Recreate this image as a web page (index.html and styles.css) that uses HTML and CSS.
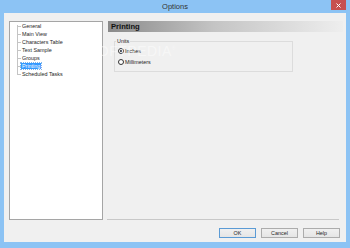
FILE: index.html
```html
<!DOCTYPE html>
<html lang="en">
<head>
    <meta charset="UTF-8">
    <title>Options</title>
    <link rel="stylesheet" href="styles.css">
</head>
<body>
    <div class="window">
        <div class="titlebar">
            <span></span>
            <span class="title">Options</span>
            <button class="close" type="button">
                <svg viewBox="0 0 10 10" width="5" height="5">
                    <path d="M1 1L9 9M9 1L1 9" stroke="#fff" stroke-width="2"></path>
                </svg>
            </button>
        </div>

        <div class="client">
            <div class="main">
                <!-- Left tree of pages -->
                <div class="tree">
                    <ul class="tree-list">
                        <li><span>General</span></li>
                        <li><span>Main View</span></li>
                        <li><span>Characters Table</span></li>
                        <li><span>Text Sample</span></li>
                        <li><span>Groups</span></li>
                        <li><span class="selected">Printing</span></li>
                        <li><span>Scheduled Tasks</span></li>
                    </ul>
                </div>

                <!-- Page content -->
                <div class="panel">
                    <div class="panel-header">Printing</div>

                    <fieldset class="group">
                        <legend>Units</legend>
                        <div class="radio-row">
                            <span class="radio checked"></span>
                            <span>Inches</span>
                        </div>
                        <div class="radio-row">
                            <span class="radio"></span>
                            <span>Millimeters</span>
                        </div>
                    </fieldset>

                    <div class="separator"></div>
                </div>
            </div>

            <div class="buttons">
                <button type="button" class="btn btn-default">OK</button>
                <button type="button" class="btn">Cancel</button>
                <button type="button" class="btn">Help</button>
            </div>
        </div>

        <div class="watermark">SOFTPEDIA<sup>®</sup></div>
    </div>
</body>
</html>
```

FILE: styles.css
```css
/* Page */
* {
    box-sizing: border-box;
}
body {
    margin: 0;
    font-family: "Liberation Sans", Arial, sans-serif;
    color: #1e1e1e;
}

/* Window frame */
.window {
    position: relative;
    width: 350px;
    height: 248px;
    padding: 0 4px 6px 4px;
    background-color: #8cc3f4;
    display: flex;
    flex-direction: column;
}

.titlebar {
    height: 13px;
    display: grid;
    grid-template-columns: 1fr auto 1fr;
    align-items: start;
}
.title {
    font-size: 7.5px;
    line-height: 14px;
    color: #333;
}
.close {
    justify-self: end;
    width: 15px;
    height: 10px;
    padding: 0;
    border: none;
    background-color: #c75050;
    display: flex;
    align-items: center;
    justify-content: center;
}

/* Client area */
.client {
    flex: 1;
    background-color: #f0f0f0;
    padding: 8px 3px 4px 5px;
    display: flex;
    flex-direction: column;
}
.main {
    height: 199px;
    display: flex;
    gap: 5px;
}

/* Tree */
.tree {
    width: 94px;
    flex: none;
    background-color: #fff;
    border: 1px solid #a5a5a5;
    padding-left: 7px;
}
.tree-list {
    list-style: none;
    margin: 0;
    padding: 0;
}
.tree-list li {
    position: relative;
    height: 8px;
    line-height: 8px;
    padding-left: 4px;
    font-size: 5.4px;
    white-space: nowrap;
}
.tree-list li::before {
    content: "";
    position: absolute;
    left: 0;
    top: 4px;
    width: 4px;
    border-top: 1px solid #c4c4c4;
}
.tree-list li::after {
    content: "";
    position: absolute;
    left: 0;
    top: 0;
    bottom: 0;
    border-left: 1px solid #c4c4c4;
}
.tree-list li:first-child::after {
    top: 3px;
}
.tree-list li:last-child::after {
    bottom: 4px;
}
.tree-list span {
    padding: 0 1px;
}
.tree-list .selected {
    background-color: #3399ff;
    color: #fff;
    outline: 1px dotted #7fb5ea;
}

/* Right panel */
.panel {
    flex: 1;
    display: flex;
    flex-direction: column;
}
.panel-header {
    height: 11px;
    line-height: 11px;
    padding-left: 3px;
    font-size: 7.6px;
    font-weight: 700;
    color: #111;
    background: linear-gradient(to right, #8a8a8a 0%, #c4c4c4 45%, #eeeeee 100%);
}

.group {
    margin: 6px 0 0 6px;
    width: 179px;
    padding: 1px 3px 4px 3px;
    border: 1px solid #dcdcdc;
}
.group legend {
    margin-left: -2px;
    padding: 0 1px;
    font-size: 5.4px;
    line-height: 7px;
}
.radio-row {
    height: 10px;
    display: flex;
    align-items: center;
    gap: 1px;
    font-size: 5.4px;
}
.radio-row + .radio-row {
    margin-top: 1px;
}
.radio {
    width: 6px;
    height: 6px;
    border: 1px solid #333;
    border-radius: 50%;
    background-color: #fff;
    display: flex;
    align-items: center;
    justify-content: center;
}
.radio.checked::after {
    content: "";
    width: 2px;
    height: 2px;
    border-radius: 50%;
    background-color: #1e1e1e;
}

.separator {
    margin: auto 4px 0 -1px;
    height: 1px;
    background-color: #c8c8c8;
}

/* Dialog buttons */
.buttons {
    margin-top: 8px;
    padding-right: 3px;
    display: flex;
    justify-content: flex-end;
    gap: 5px;
}
.btn {
    width: 37px;
    height: 10px;
    padding: 0;
    font-family: inherit;
    font-size: 5.4px;
    color: #1e1e1e;
    background: linear-gradient(#f0f0f0, #e5e5e5);
    border: 1px solid #acacac;
}
.btn-default {
    border-color: #5b9bd5;
}

/* Watermark over the picture */
.watermark {
    position: absolute;
    left: 88px;
    top: 43px;
    font-size: 14px;
    letter-spacing: 0.5px;
    color: rgba(255, 255, 255, 0.45);
    pointer-events: none;
}
.watermark sup {
    font-size: 5px;
}
```
